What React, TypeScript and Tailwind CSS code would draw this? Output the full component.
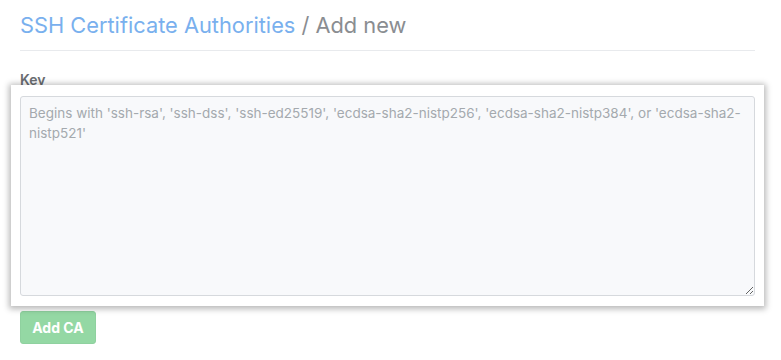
export default function App() {
  return (
    <div className="min-h-screen bg-white px-5 pt-[10px] font-['Inter','Liberation_Sans',Arial,sans-serif]">
      <div className="w-[735px]">
        <h1 className="border-b border-[#e8eaed] pb-[10px] text-[21.8px] leading-[30px] font-normal">
          <a href="#" className="text-[#79b0ee]">SSH Certificate Authorities</a>
          <span className="text-[#8a8d91]"> / Add new</span>
        </h1>

        <form className="mt-5">
          <label className="block text-[14px] leading-[17px] font-semibold text-[#6a6d71]">Key</label>
          <div className="relative z-10 -mx-[9px] -mt-[3px] bg-white px-[9px] pt-[11px] pb-[10px] shadow-[0_1px_6px_2px_rgba(0,0,0,0.28)]">
            <textarea
              placeholder="Begins with 'ssh-rsa', 'ssh-dss', 'ssh-ed25519', 'ecdsa-sha2-nistp256', 'ecdsa-sha2-nistp384', or 'ecdsa-sha2-nistp521'"
              className="block h-[200px] w-full rounded-[3px] border border-[#d6d9dd] bg-[#f8f9fb] px-2 py-[6px] text-[13.5px] leading-[20px] text-[#24292e] placeholder:text-[#a4a9ae] outline-none"
            />
          </div>
          <button
            type="button"
            className="mt-[5px] h-[33px] w-[76px] rounded-[3px] border border-[#8fd19f] bg-[#94d8a4] text-[14px] font-bold text-white"
          >
            Add CA
          </button>
        </form>
      </div>
    </div>
  );
}
